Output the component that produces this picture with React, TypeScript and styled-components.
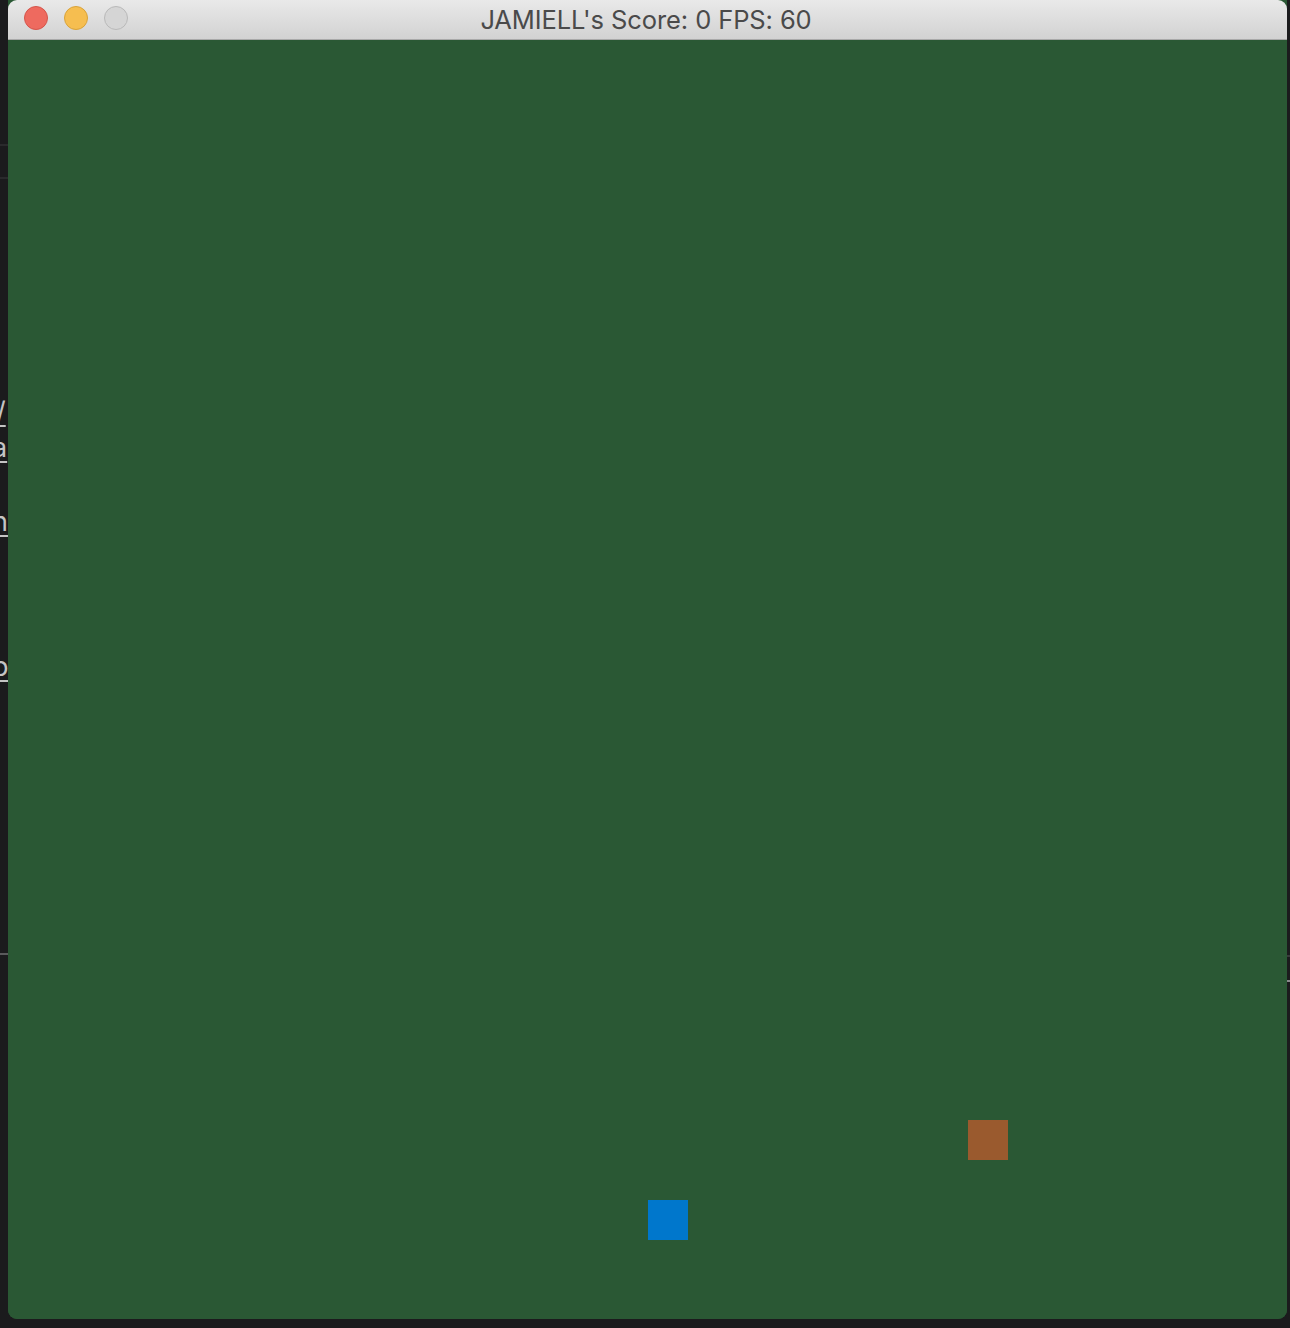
import React from "react";
import styled, { createGlobalStyle } from "styled-components";

const Global = createGlobalStyle`
  html, body { margin: 0; padding: 0; background: #1b1b1d; }
  body { width: 1290px; height: 1328px; overflow: hidden; font-family: Inter, "Liberation Sans", sans-serif; }
`;

const Desktop = styled.div`
  position: relative;
  width: 1290px;
  height: 1328px;
  background: #1b1b1d;
  padding: 0 3px 0 8px;
  box-sizing: border-box;
`;

const BgText = styled.span<{ $top: number; $left: number }>`
  position: absolute;
  top: ${(p) => p.$top}px;
  left: ${(p) => p.$left}px;
  font-family: Inter, "Liberation Sans", sans-serif;
  font-size: 27px;
  line-height: 30px;
  color: #c4c4c4;
  text-decoration: underline;
  text-decoration-thickness: 2px;
  text-underline-offset: 4px;
  white-space: nowrap;
`;

const BgRule = styled.div<{ $top: number; $left: number; $width: number; $color: string }>`
  position: absolute;
  top: ${(p) => p.$top}px;
  left: ${(p) => p.$left}px;
  width: ${(p) => p.$width}px;
  height: 2px;
  background: ${(p) => p.$color};
`;

const Window = styled.div`
  position: relative;
  z-index: 1;
  width: 1279px;
  height: 1319px;
  border-radius: 0 0 9px 9px;
  overflow: hidden;
  display: flex;
  flex-direction: column;
  background: #2a5834;
`;

const TitleBar = styled.div`
  position: relative;
  height: 39px;
  flex: none;
  display: flex;
  align-items: center;
  justify-content: center;
  background: linear-gradient(#e9e9e9, #d2d2d2);
  border-bottom: 1px solid #a9a9a9;
  border-radius: 9px 9px 0 0;
`;

const Lights = styled.div`
  position: absolute;
  left: 16px;
  top: 6px;
  display: flex;
  gap: 16px;
`;

const Light = styled.span<{ $fill: string; $stroke: string }>`
  width: 24px;
  height: 24px;
  border-radius: 50%;
  box-sizing: border-box;
  background: ${(p) => p.$fill};
  border: 1px solid ${(p) => p.$stroke};
`;

const Title = styled.div`
  font-family: Inter, "Liberation Sans", sans-serif;
  font-size: 25.5px;
  font-weight: 400;
  color: #4a4a4a;
  margin-right: 3px;
  letter-spacing: -0.1px;
`;

const Canvas = styled.div`
  position: relative;
  flex: 1;
  background: #2a5834;
`;

const Block = styled.div<{ $x: number; $y: number; $color: string }>`
  position: absolute;
  left: ${(p) => p.$x}px;
  top: ${(p) => p.$y}px;
  width: 40px;
  height: 40px;
  background: ${(p) => p.$color};
`;

export default function App() {
  return (
    <>
      <Global />
      <Desktop>
        <BgRule $top={144} $left={0} $width={8} $color="#2a2a2c" />
        <BgRule $top={177} $left={0} $width={8} $color="#2a2a2c" />
        <BgText $top={397} $left={-4}>/</BgText>
        <BgText $top={433} $left={-8}>a</BgText>
        <BgText $top={507} $left={-8}>n</BgText>
        <BgText $top={652} $left={-8}>p</BgText>
        <BgRule $top={953} $left={0} $width={8} $color="#5a5a5c" />
        <BgRule $top={955} $left={1287} $width={3} $color="#3a3a3c" />
        <BgRule $top={980} $left={1287} $width={3} $color="#8a8a8c" />
        <Window>
          <TitleBar>
            <Lights>
              <Light $fill="#ee6a5f" $stroke="#d5554b" />
              <Light $fill="#f6be50" $stroke="#d9a33a" />
              <Light $fill="#d5d5d5" $stroke="#b9b9b9" />
            </Lights>
            <Title>JAMIELL's Score: 0 FPS: 60</Title>
          </TitleBar>
          <Canvas>
            <Block $x={640} $y={1160} $color="#0077cc" />
            <Block $x={960} $y={1080} $color="#9a5a2e" />
          </Canvas>
        </Window>
      </Desktop>
    </>
  );
}
